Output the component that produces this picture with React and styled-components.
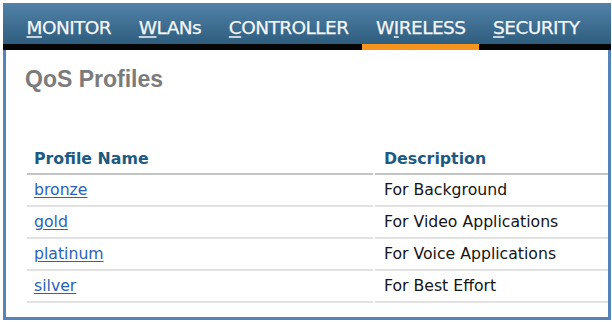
import React from "react";
import styled, { createGlobalStyle } from "styled-components";

const Global = createGlobalStyle`
  html, body { margin: 0; padding: 0; background: #ffffff; }
  body { width: 612px; height: 322px; overflow: hidden; }
`;

const Frame = styled.div`
  box-sizing: border-box;
  margin: 3px 0 0 3px;
  width: 608px;
  height: 317px;
  border: 3px solid #5483ba;
  border-top: none;
  background: #ffffff;
  display: flex;
  flex-direction: column;
`;

const Nav = styled.nav`
  display: flex;
  align-items: stretch;
  height: 41px;
  margin: 0 -3px;
  padding-left: 9.7px;
  background: linear-gradient(#5282a8, #2e5d7e);
  border-bottom: 6px solid #050505;
`;

const NavItem = styled.div`
  padding: 14px 13.8px 0;
  margin-bottom: -6px;
  border-bottom: 6px solid ${(p) => (p.$active ? "#f7941e" : "transparent")};
  font-family: "DejaVu Sans", Verdana, sans-serif;
  font-size: 18.5px;
  letter-spacing: -0.55px;
  line-height: 22px;
  color: #f4f7fa;
  white-space: nowrap;
  -webkit-text-stroke: 0.25px #f4f7fa;
`;

const Key = styled.span`
  text-decoration: underline;
  text-decoration-color: #c9d3dc;
  text-decoration-thickness: 2px;
  text-underline-offset: 2px;
`;

const Title = styled.h1`
  margin: 16px 0 0 19px;
  font-family: "Liberation Sans", Arial, sans-serif;
  font-weight: bold;
  font-size: 23px;
  line-height: 26px;
  color: #7b7b7b;
`;

const Table = styled.table`
  margin: 57px 0 0 19px;
  width: calc(100% - 17px);
  border-collapse: separate;
  border-spacing: 2px 0;
  table-layout: fixed;
`;

const Head = styled.th`
  box-sizing: border-box;
  text-align: left;
  padding: 0 0 4px ${(p) => p.$pad}px;
  width: ${(p) => (p.$w ? `${p.$w}px` : "auto")};
  font-family: "DejaVu Sans", Verdana, sans-serif;
  font-weight: bold;
  font-size: 15.8px;
  line-height: 20px;
  color: #1d5a82;
  border-bottom: 2px solid #c4c4c4;
`;

const Cell = styled.td`
  padding: 5px 0 5px ${(p) => p.$pad}px;
  font-family: "DejaVu Sans", Verdana, sans-serif;
  font-size: 15.7px;
  line-height: 20px;
  color: #151515;
  border-bottom: 2px solid #e2e2e2;
  white-space: nowrap;
`;

const ProfileLink = styled.a`
  color: #2a63b6;
  text-decoration: underline;
  text-underline-offset: 2px;
`;

const navItems = [
  { pre: "", key: "M", post: "ONITOR" },
  { pre: "", key: "W", post: "LANs" },
  { pre: "", key: "C", post: "ONTROLLER" },
  { pre: "W", key: "I", post: "RELESS", active: true },
  { pre: "", key: "S", post: "ECURITY" },
];

const rows = [
  ["bronze", "For Background"],
  ["gold", "For Video Applications"],
  ["platinum", "For Voice Applications"],
  ["silver", "For Best Effort"],
];

export default function App() {
  return (
    <>
      <Global />
      <Frame>
        <Nav>
          {navItems.map((n) => (
            <NavItem key={n.key + n.post} $active={n.active}>
              {n.pre}
              <Key>{n.key}</Key>
              {n.post}
            </NavItem>
          ))}
        </Nav>
        <Title>QoS Profiles</Title>
        <Table>
          <thead>
            <tr>
              <Head $pad={7} $w={346}>Profile Name</Head>
              <Head $pad={9}>Description</Head>
            </tr>
          </thead>
          <tbody>
            {rows.map(([name, desc]) => (
              <tr key={name}>
                <Cell $pad={7}>
                  <ProfileLink href="#">{name}</ProfileLink>
                </Cell>
                <Cell $pad={9}>{desc}</Cell>
              </tr>
            ))}
          </tbody>
        </Table>
      </Frame>
    </>
  );
}
